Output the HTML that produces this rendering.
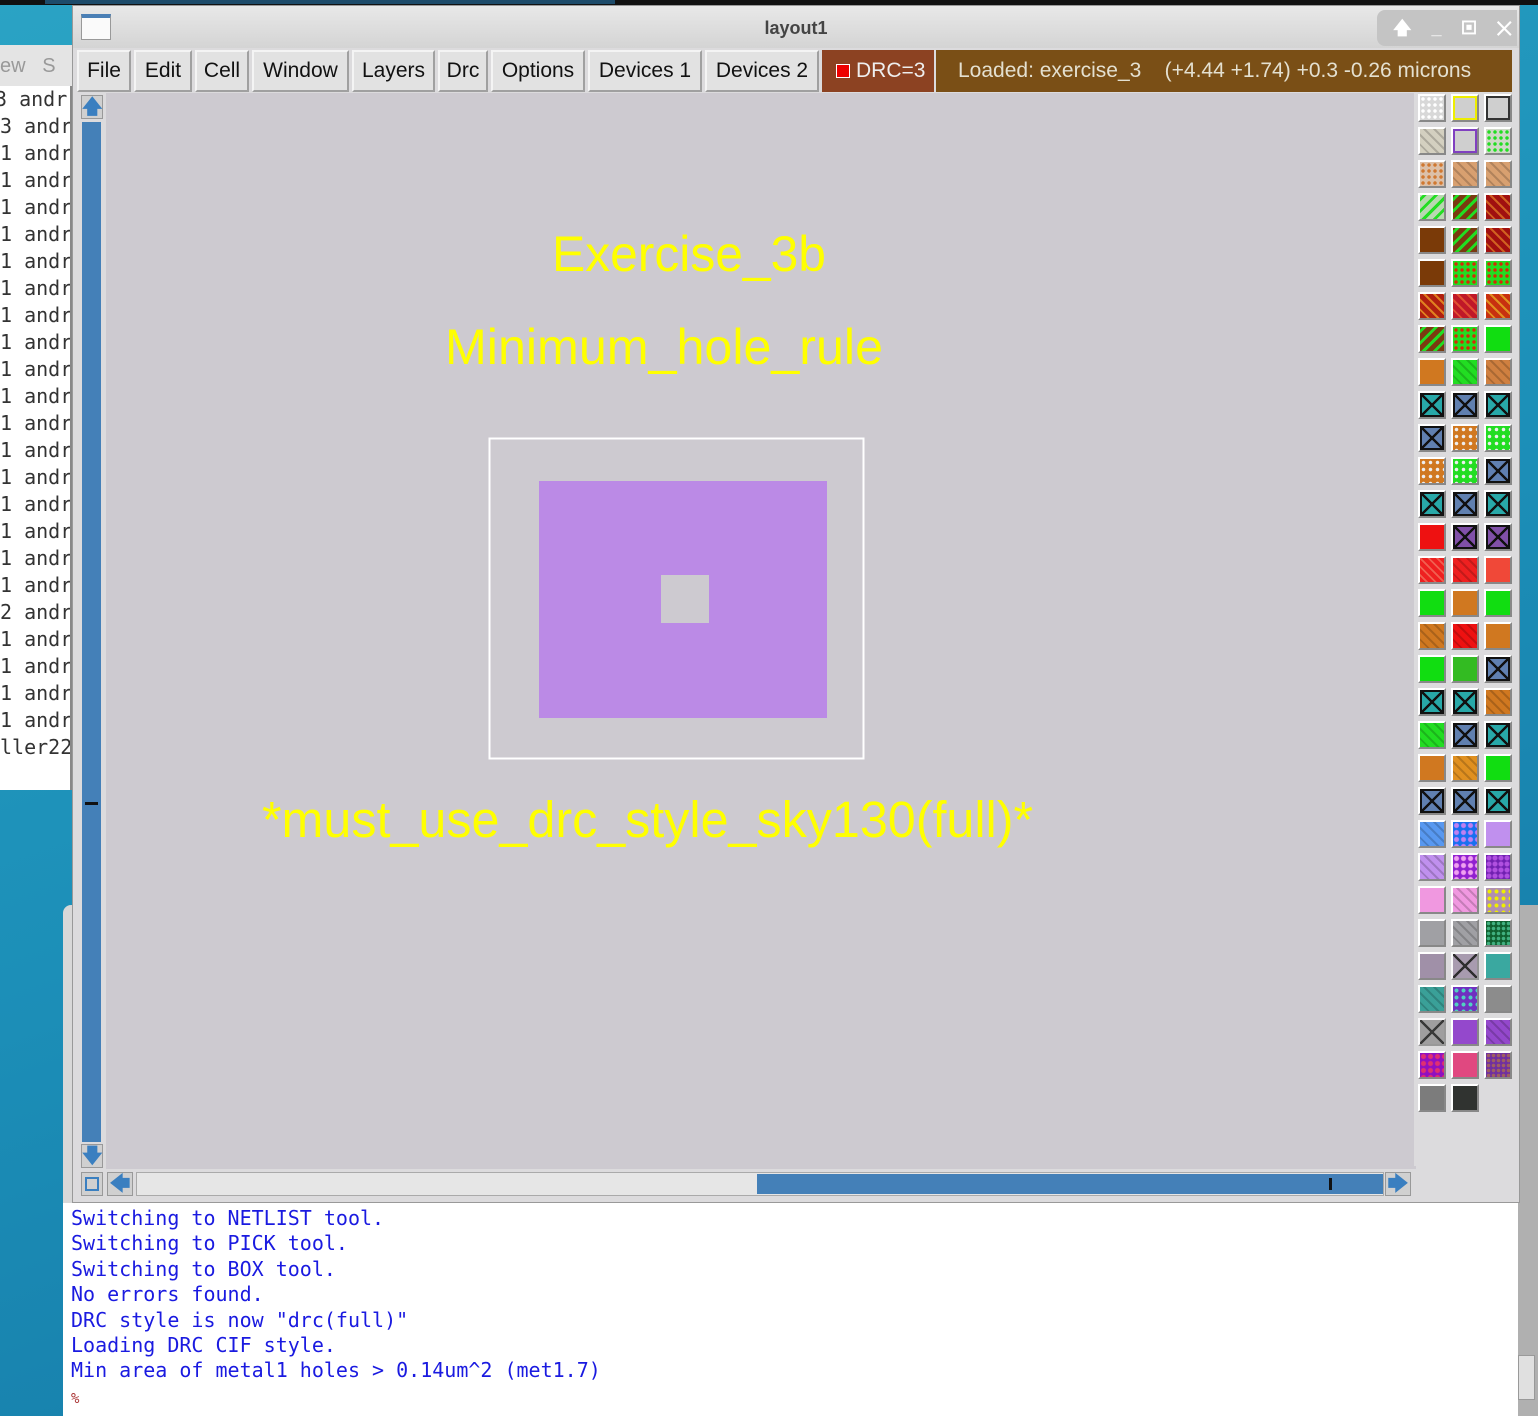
<!DOCTYPE html>
<html><head><meta charset="utf-8"><style>
*{margin:0;padding:0;box-sizing:border-box}
body{width:1538px;height:1416px;overflow:hidden;position:relative;background:linear-gradient(160deg,#2aa3c4 0%,#1c8fb8 50%,#1475a3 100%);font-family:"Liberation Sans",sans-serif}
.abs{position:absolute}
.term{left:0;top:86px;width:72px;height:704px;background:#fff;border-right:2px solid #888;font-family:"DejaVu Sans Mono","Liberation Mono",monospace;font-size:20px;color:#333;line-height:27px;padding-top:0;white-space:pre;overflow:hidden;text-indent:-5px}
.win{left:72px;top:5px;width:1448px;height:1198px;background:#dcdbdd;border:1px solid #999}
.title{left:0;top:0;width:1446px;height:42px;background:linear-gradient(#e8e8e8,#d4d4d4);text-align:center;font-weight:bold;font-size:18px;color:#444;line-height:44px}
.menu{top:44px;height:42px;background:#e2e2e2;border:2px outset #f4f4f4;font-size:21px;color:#111;line-height:38px;text-align:center}
.cell{position:absolute;width:28px;height:28px;border:2px solid #fff;border-right-color:#888;border-bottom-color:#888}
.con{left:63px;top:1203px;width:1455px;height:213px;background:#fff;font-family:"DejaVu Sans Mono","Liberation Mono",monospace;font-size:20px;color:#1a1ae0;line-height:25.4px;padding:3px 0 0 8px;white-space:pre}
</style></head><body>
<div class="abs" style="left:0;top:0;width:1538px;height:5px;background:#111"></div>
<div class="abs" style="left:45px;top:0;width:570px;height:4px;background:#1d4b6a"></div>
<div class="abs" style="left:0;top:45px;width:72px;height:41px;background:#e4e4e4;color:#999;font-size:20px;line-height:42px;white-space:pre">ew   S</div>
<div class="abs term">3 andr
3 andr
1 andr
1 andr
1 andr
1 andr
1 andr
1 andr
1 andr
1 andr
1 andr
1 andr
1 andr
1 andr
1 andr
1 andr
1 andr
1 andr
1 andr
2 andr
1 andr
1 andr
1 andr
1 andr
ller22</div>
<!-- console window behind -->
<div class="abs" style="left:63px;top:905px;width:1475px;height:511px;background:#d8d8d8;border-radius:8px 8px 0 0"></div>
<div class="abs" style="left:1516px;top:905px;width:22px;height:511px;background:#b0b0b0"></div>
<div class="abs" style="left:1518px;top:1355px;width:17px;height:45px;background:#e0e0e0;border:1px solid #999"></div>
<div class="abs con">Switching to NETLIST tool.
Switching to PICK tool.
Switching to BOX tool.
No errors found.
DRC style is now "drc(full)"
Loading DRC CIF style.
Min area of metal1 holes &gt; 0.14um^2 (met1.7)
<span style="color:#a33;font-size:14px">%</span></div>
<div class="abs win">
 <div class="abs title">layout1</div>
 <div class="abs" style="left:8px;top:8px;width:30px;height:26px;background:#fafafa;border:1px solid #999;border-top:4px solid #4a7fb5"></div>
 <div class="abs" style="left:1304px;top:4px;width:140px;height:36px;background:#c4c4c4;border-radius:8px 0 0 8px;color:#fff;font-size:18px;font-weight:bold;line-height:36px;padding-left:16px;white-space:pre">🡅    _    ▣    ✕</div>
 <div class="abs menu" style="left:4px;width:54px">File</div>
 <div class="abs menu" style="left:61px;width:58px">Edit</div>
 <div class="abs menu" style="left:122px;width:54px">Cell</div>
 <div class="abs menu" style="left:179px;width:97px">Window</div>
 <div class="abs menu" style="left:279px;width:83px">Layers</div>
 <div class="abs menu" style="left:365px;width:50px">Drc</div>
 <div class="abs menu" style="left:418px;width:94px">Options</div>
 <div class="abs menu" style="left:515px;width:114px">Devices 1</div>
 <div class="abs menu" style="left:632px;width:114px">Devices 2</div>
 <div class="abs" style="left:749px;top:44px;width:112px;height:42px;background:#8c4222;color:#eee;font-size:21px;line-height:42px;padding-left:14px"><span style="display:inline-block;width:14px;height:14px;background:#e00;border:1px solid #fff;vertical-align:-1px;margin-right:6px"></span>DRC=3</div>
 <div class="abs" style="left:863px;top:44px;width:576px;height:42px;background:#7a4f16;color:#e4e0d0;font-size:21px;line-height:42px;padding-left:22px;white-space:pre">Loaded: exercise_3    (+4.44 +1.74) +0.3 -0.26 microns</div>
 <!-- canvas -->
 <div class="abs" style="left:33px;top:87px;width:1310px;height:1076px;background:#cdcad0"></div>
 <!-- vertical scroll -->
 <div class="abs" style="left:7px;top:88px;width:24px;height:1076px;background:#dcdbdd"></div>
 <div class="abs" style="left:8px;top:89px;width:22px;height:24px;background:#d0d0d0;border:1px solid #999;color:#3a7fc0;font-size:20px;font-weight:bold;text-align:center;line-height:22px">🡅</div>
 <div class="abs" style="left:9px;top:116px;width:19px;height:1020px;background:#4480b8"></div>
 <div class="abs" style="left:12px;top:796px;width:13px;height:3px;background:#111"></div>
 <div class="abs" style="left:8px;top:1138px;width:22px;height:24px;background:#d0d0d0;border:1px solid #999;color:#3a7fc0;font-size:20px;font-weight:bold;text-align:center;line-height:22px">🡇</div>
 <!-- horizontal scroll -->
 <div class="abs" style="left:8px;top:1166px;width:22px;height:24px;background:#d0d0d0;border:1px solid #999"><div class="abs" style="left:3px;top:4px;width:14px;height:14px;border:2px solid #3a7fc0"></div></div>
 <div class="abs" style="left:34px;top:1166px;width:26px;height:24px;background:#d0d0d0;border:1px solid #999;color:#3a7fc0;font-size:20px;font-weight:bold;text-align:center;line-height:22px">🡄</div>
 <div class="abs" style="left:63px;top:1166px;width:1248px;height:24px;background:#e6e6e6;border:1px solid #aaa"></div>
 <div class="abs" style="left:684px;top:1168px;width:626px;height:20px;background:#4480b8"></div>
 <div class="abs" style="left:1256px;top:1172px;width:3px;height:12px;background:#111"></div>
 <div class="abs" style="left:1312px;top:1166px;width:26px;height:24px;background:#d0d0d0;border:1px solid #999;color:#3a7fc0;font-size:20px;font-weight:bold;text-align:center;line-height:22px">🡆</div>
</div>
<!-- layout drawing -->
<svg class="abs" style="left:0;top:0" width="1538" height="1416">
 <rect x="489.5" y="438.5" width="374" height="320" fill="none" stroke="#fff" stroke-width="2"/>
 <rect x="539" y="481" width="288" height="237" fill="#bb8ae6"/>
 <rect x="661" y="575" width="48" height="48" fill="#cdcad0"/>
 <g fill="#ffff00" font-family="Liberation Sans,sans-serif">
  <text x="552" y="271" font-size="50" textLength="274" lengthAdjust="spacingAndGlyphs">Exercise_3b</text>
  <text x="445" y="364" font-size="50" textLength="438" lengthAdjust="spacingAndGlyphs">Minimum_hole_rule</text>
  <text x="262" y="837" font-size="51" textLength="771" lengthAdjust="spacingAndGlyphs">*must_use_drc_style_sky130(full)*</text>
 </g>
</svg>
<!-- palette -->
<div class="abs" style="left:1414px;top:92px;width:104px;height:1074px;background:#dcdbdd"></div>
<div class="abs" id="pal" style="left:1418px;top:94px">
<style>
.X{background-image:linear-gradient(45deg,transparent 46%,#111 46% 54%,transparent 54%),linear-gradient(-45deg,transparent 46%,#111 46% 54%,transparent 54%)!important;outline:2px solid #111;outline-offset:-4px}
.S{background-image:repeating-linear-gradient(45deg,transparent 0 5px,rgba(0,0,0,.18) 5px 7px)}
.D{background-image:radial-gradient(circle,rgba(255,0,0,.8) 1.5px,transparent 2px);background-size:6px 6px}
</style>
<div class="cell" style="left:0;top:0;background:#d8d8d8;background-image:radial-gradient(circle,#fff 1.5px,transparent 2px);background-size:6px 6px"></div>
<div class="cell" style="left:33px;top:0;background:#cfcfcf;box-shadow:inset 0 0 0 2px #ee0"></div>
<div class="cell" style="left:66px;top:0;background:#cfcfcf;box-shadow:inset 0 0 0 2px #333"></div>

<div class="cell S" style="left:0;top:33px;background-color:#d4d0c0"></div>
<div class="cell" style="left:33px;top:33px;background:#cfcfcf;box-shadow:inset 0 0 0 2px #8040c0"></div>
<div class="cell" style="left:66px;top:33px;background:#d0d8c8;background-image:radial-gradient(circle,#2d2 1.5px,transparent 2px);background-size:6px 6px"></div>

<div class="cell" style="left:0;top:66px;background:#dcc0a8;background-image:radial-gradient(circle,#d07830 1.5px,transparent 2px);background-size:6px 6px"></div>
<div class="cell S" style="left:33px;top:66px;background-color:#d8a070"></div>
<div class="cell S" style="left:66px;top:66px;background-color:#d8a070"></div>

<div class="cell" style="left:0;top:99px;background:#b8d8b0;background-image:repeating-linear-gradient(-45deg,transparent 0 5px,#2d2 5px 8px)"></div>
<div class="cell" style="left:33px;top:99px;background:#7a3a10;background-image:repeating-linear-gradient(-45deg,transparent 0 5px,#2d2 5px 8px)"></div>
<div class="cell S" style="left:66px;top:99px;background-color:#a01010;background-image:repeating-linear-gradient(45deg,transparent 0 5px,#d06020 5px 7px)"></div>

<div class="cell" style="left:0;top:132px;background:#7a3a08"></div>
<div class="cell" style="left:33px;top:132px;background:#7a3a10;background-image:repeating-linear-gradient(-45deg,transparent 0 5px,#2d2 5px 8px)"></div>
<div class="cell" style="left:66px;top:132px;background:#a01010;background-image:repeating-linear-gradient(45deg,transparent 0 5px,#d06020 5px 7px)"></div>

<div class="cell" style="left:0;top:165px;background:#7a3a08"></div>
<div class="cell D" style="left:33px;top:165px;background-color:#22dd22"></div>
<div class="cell D" style="left:66px;top:165px;background-color:#22dd22"></div>

<div class="cell" style="left:0;top:198px;background:#b02010;background-image:repeating-linear-gradient(45deg,transparent 0 5px,#e08020 5px 7px)"></div>
<div class="cell" style="left:33px;top:198px;background:#c01828;background-image:repeating-linear-gradient(45deg,transparent 0 5px,#e05030 5px 7px)"></div>
<div class="cell" style="left:66px;top:198px;background:#c83010;background-image:repeating-linear-gradient(45deg,transparent 0 5px,#e09020 5px 7px)"></div>

<div class="cell" style="left:0;top:231px;background:#7a3a10;background-image:repeating-linear-gradient(-45deg,transparent 0 5px,#2d2 5px 8px)"></div>
<div class="cell D" style="left:33px;top:231px;background-color:#22dd22"></div>
<div class="cell" style="left:66px;top:231px;background:#11dd11"></div>

<div class="cell" style="left:0;top:264px;background:#d07820"></div>
<div class="cell S" style="left:33px;top:264px;background-color:#22dd22"></div>
<div class="cell S" style="left:66px;top:264px;background-color:#d08040"></div>

<div class="cell X" style="left:0;top:297px;background:#28a8a8"></div>
<div class="cell X" style="left:33px;top:297px;background:#6080b0"></div>
<div class="cell X" style="left:66px;top:297px;background:#28a8a8"></div>

<div class="cell X" style="left:0;top:330px;background:#6080b0"></div>
<div class="cell" style="left:33px;top:330px;background:#d07820;background-image:radial-gradient(circle,#eee 1.5px,transparent 2px);background-size:7px 7px"></div>
<div class="cell" style="left:66px;top:330px;background:#22dd22;background-image:radial-gradient(circle,#eee 1.5px,transparent 2px);background-size:7px 7px"></div>

<div class="cell" style="left:0;top:363px;background:#d07820;background-image:radial-gradient(circle,#eee 1.5px,transparent 2px);background-size:7px 7px"></div>
<div class="cell" style="left:33px;top:363px;background:#22dd22;background-image:radial-gradient(circle,#eee 1.5px,transparent 2px);background-size:7px 7px"></div>
<div class="cell X" style="left:66px;top:363px;background:#6080b0"></div>

<div class="cell X" style="left:0;top:396px;background:#28a8a8"></div>
<div class="cell X" style="left:33px;top:396px;background:#6080b0"></div>
<div class="cell X" style="left:66px;top:396px;background:#28a8a8"></div>

<div class="cell" style="left:0;top:429px;background:#ee1111"></div>
<div class="cell X" style="left:33px;top:429px;background:#8050a8"></div>
<div class="cell X" style="left:66px;top:429px;background:#8050a8"></div>

<div class="cell" style="left:0;top:462px;background:#ee2020;background-image:repeating-linear-gradient(45deg,transparent 0 4px,#f06050 4px 6px)"></div>
<div class="cell S" style="left:33px;top:462px;background-color:#ee2020"></div>
<div class="cell" style="left:66px;top:462px;background:#f04838"></div>

<div class="cell" style="left:0;top:495px;background:#11dd11"></div>
<div class="cell" style="left:33px;top:495px;background:#d07820"></div>
<div class="cell" style="left:66px;top:495px;background:#11dd11"></div>

<div class="cell S" style="left:0;top:528px;background-color:#d07820"></div>
<div class="cell S" style="left:33px;top:528px;background-color:#ee1111"></div>
<div class="cell" style="left:66px;top:528px;background:#d07820"></div>

<div class="cell" style="left:0;top:561px;background:#11dd11"></div>
<div class="cell" style="left:33px;top:561px;background:#33bb22"></div>
<div class="cell X" style="left:66px;top:561px;background:#6080b0"></div>

<div class="cell X" style="left:0;top:594px;background:#28a8a8"></div>
<div class="cell X" style="left:33px;top:594px;background:#28a8a8"></div>
<div class="cell S" style="left:66px;top:594px;background-color:#d07820"></div>

<div class="cell S" style="left:0;top:627px;background-color:#22dd22"></div>
<div class="cell X" style="left:33px;top:627px;background:#6080b0"></div>
<div class="cell X" style="left:66px;top:627px;background:#28a8a8"></div>

<div class="cell" style="left:0;top:660px;background:#d07820"></div>
<div class="cell S" style="left:33px;top:660px;background-color:#e09020"></div>
<div class="cell" style="left:66px;top:660px;background:#11dd11"></div>

<div class="cell X" style="left:0;top:693px;background:#6080b0"></div>
<div class="cell X" style="left:33px;top:693px;background:#6080b0"></div>
<div class="cell X" style="left:66px;top:693px;background:#28a8a8"></div>

<div class="cell S" style="left:0;top:726px;background-color:#5898f0"></div>
<div class="cell" style="left:33px;top:726px;background:#1870f0;background-image:radial-gradient(circle,#c080f0 2px,transparent 3px);background-size:7px 7px"></div>
<div class="cell" style="left:66px;top:726px;background:#c090ee"></div>

<div class="cell S" style="left:0;top:759px;background-color:#c090ee"></div>
<div class="cell" style="left:33px;top:759px;background:#9020d0;background-image:radial-gradient(circle,#f0a0f0 2px,transparent 3px);background-size:7px 7px"></div>
<div class="cell" style="left:66px;top:759px;background:#7020b0;background-image:radial-gradient(circle,#b050e0 2px,transparent 3px);background-size:6px 6px"></div>

<div class="cell" style="left:0;top:792px;background:#f098e0"></div>
<div class="cell S" style="left:33px;top:792px;background-color:#f098e0"></div>
<div class="cell" style="left:66px;top:792px;background:#b090b0;background-image:radial-gradient(circle,#ee0 1.8px,transparent 2.2px);background-size:7px 7px"></div>

<div class="cell" style="left:0;top:825px;background:#a0a0a4"></div>
<div class="cell S" style="left:33px;top:825px;background-color:#a0a0a4"></div>
<div class="cell" style="left:66px;top:825px;background:#106030;background-image:radial-gradient(circle,#40b080 1.5px,transparent 2px);background-size:5px 5px"></div>

<div class="cell" style="left:0;top:858px;background:#a090a8"></div>
<div class="cell X" style="left:33px;top:858px;background:#a090a8;outline:none;opacity:.85"></div>
<div class="cell" style="left:66px;top:858px;background:#3aa8a0"></div>

<div class="cell S" style="left:0;top:891px;background-color:#3aa098"></div>
<div class="cell" style="left:33px;top:891px;background:#7030c0;background-image:radial-gradient(circle,#50d0c0 1.8px,transparent 2.2px);background-size:7px 7px"></div>
<div class="cell" style="left:66px;top:891px;background:#8c8c8c"></div>

<div class="cell X" style="left:0;top:924px;background:#909090;outline:none;opacity:.8"></div>
<div class="cell" style="left:33px;top:924px;background:#9448cc"></div>
<div class="cell S" style="left:66px;top:924px;background-color:#9448cc"></div>

<div class="cell" style="left:0;top:957px;background:#9010c0;background-image:radial-gradient(circle,#e03070 2px,transparent 3px);background-size:7px 7px"></div>
<div class="cell" style="left:33px;top:957px;background:#e04880"></div>
<div class="cell" style="left:66px;top:957px;background:#7030a0;background-image:radial-gradient(circle,#a06060 1.5px,transparent 2px);background-size:5px 5px"></div>

<div class="cell" style="left:0;top:990px;background:#7c7c7c"></div>
<div class="cell" style="left:33px;top:990px;background:#303330"></div>
</div>
</body></html>
